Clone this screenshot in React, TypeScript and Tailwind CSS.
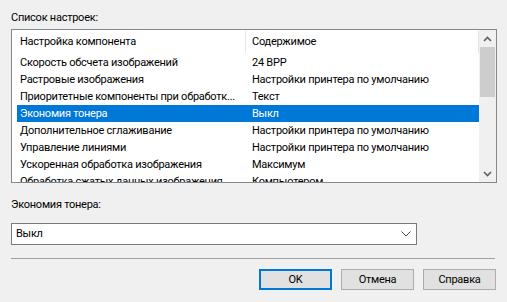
import React from "react";

const rows: [string, string][] = [
  ["Скорость обсчета изображений", "24 BPP"],
  ["Растровые изображения", "Настройки принтера по умолчанию"],
  ["Приоритетные компоненты при обработк...", "Текст"],
  ["Экономия тонера", "Выкл"],
  ["Дополнительное сглаживание", "Настройки принтера по умолчанию"],
  ["Управление линиями", "Настройки принтера по умолчанию"],
  ["Ускоренная обработка изображения", "Максимум"],
  ["Обработка сжатых данных изображения", "Компьютером"],
];

export default function App() {
  return (
    <div
      className="w-[507px] h-[302px] bg-[#f0f0f0] text-[11px] tracking-[-0.25px] text-black overflow-hidden flex flex-col"
      style={{ fontFamily: 'Roboto, "Segoe UI", sans-serif' }}
    >
      <div className="ml-[11px] mt-[9px] h-[18px] leading-[18px]">Список настроек:</div>
      <div className="ml-[11px] mt-[2px] w-[486px] h-[154px] border border-[#828790] bg-white flex">
        <div className="flex-1 flex flex-col overflow-hidden">
          <div className="h-[24px] flex shrink-0">
            <div className="w-[234px] pl-[8px] pt-[1px] flex items-center border-r border-[#e5e5e5] my-[1px]">
              Настройка компонента
            </div>
            <div className="flex-1 pl-[6px] pt-[1px] flex items-center border-r border-[#e5e5e5] my-[1px]">
              Содержимое
            </div>
          </div>
          <div className="flex flex-col">
            {rows.map(([a, b], i) => (
              <div
                key={i}
                className={
                  "h-[17px] ml-[5px] flex items-center leading-[17px] shrink-0 " +
                  (i === 3 ? "bg-[#0078d7] text-white" : "")
                }
              >
                <div className="w-[229px] pl-[3px] whitespace-nowrap overflow-hidden">{a}</div>
                <div className="flex-1 pl-[6px] whitespace-nowrap overflow-hidden">{b}</div>
              </div>
            ))}
          </div>
        </div>
        <div className="w-[17px] bg-[#f0f0f0] flex flex-col">
          <div className="h-[17px] flex items-center justify-center">
            <svg width="9" height="6" viewBox="0 0 9 6">
              <path d="M1 5 L4.5 1.5 L8 5" stroke="#606060" strokeWidth="1.6" fill="none" />
            </svg>
          </div>
          <div className="h-[50px] mx-[1px] bg-[#cdcdcd]" />
          <div className="flex-1" />
          <div className="h-[17px] flex items-center justify-center">
            <svg width="9" height="6" viewBox="0 0 9 6">
              <path d="M1 1 L4.5 4.5 L8 1" stroke="#606060" strokeWidth="1.6" fill="none" />
            </svg>
          </div>
        </div>
      </div>
      <div className="ml-[11px] mt-[13px] h-[18px] leading-[18px]">Экономия тонера:</div>
      <div className="ml-[11px] mt-[9px] w-[406px] h-[22px] border border-[#7a7a7a] bg-white flex items-center">
        <div className="flex-1 pl-[4px] leading-[18px]">Выкл</div>
        <svg width="12" height="8" viewBox="0 0 12 8" className="mr-[4px]">
          <path d="M1.5 1.5 L6 6 L10.5 1.5" stroke="#404040" strokeWidth="1" fill="none" />
        </svg>
      </div>
      <div className="ml-[11px] mt-[13px] w-[484px] h-px bg-[#a0a0a0]" />
      <div className="mt-[10px] flex justify-end pr-[11px] gap-[9px]">
        <button className="w-[73px] h-[21px] bg-[#e1e1e1] border-2 border-[#0078d7] flex items-center justify-center leading-none">
          OK
        </button>
        <button className="w-[73px] h-[21px] bg-[#e1e1e1] border border-[#adadad] flex items-center justify-center leading-none">
          Отмена
        </button>
        <button className="w-[73px] h-[21px] bg-[#e1e1e1] border border-[#adadad] flex items-center justify-center leading-none">
          Справка
        </button>
      </div>
    </div>
  );
}
